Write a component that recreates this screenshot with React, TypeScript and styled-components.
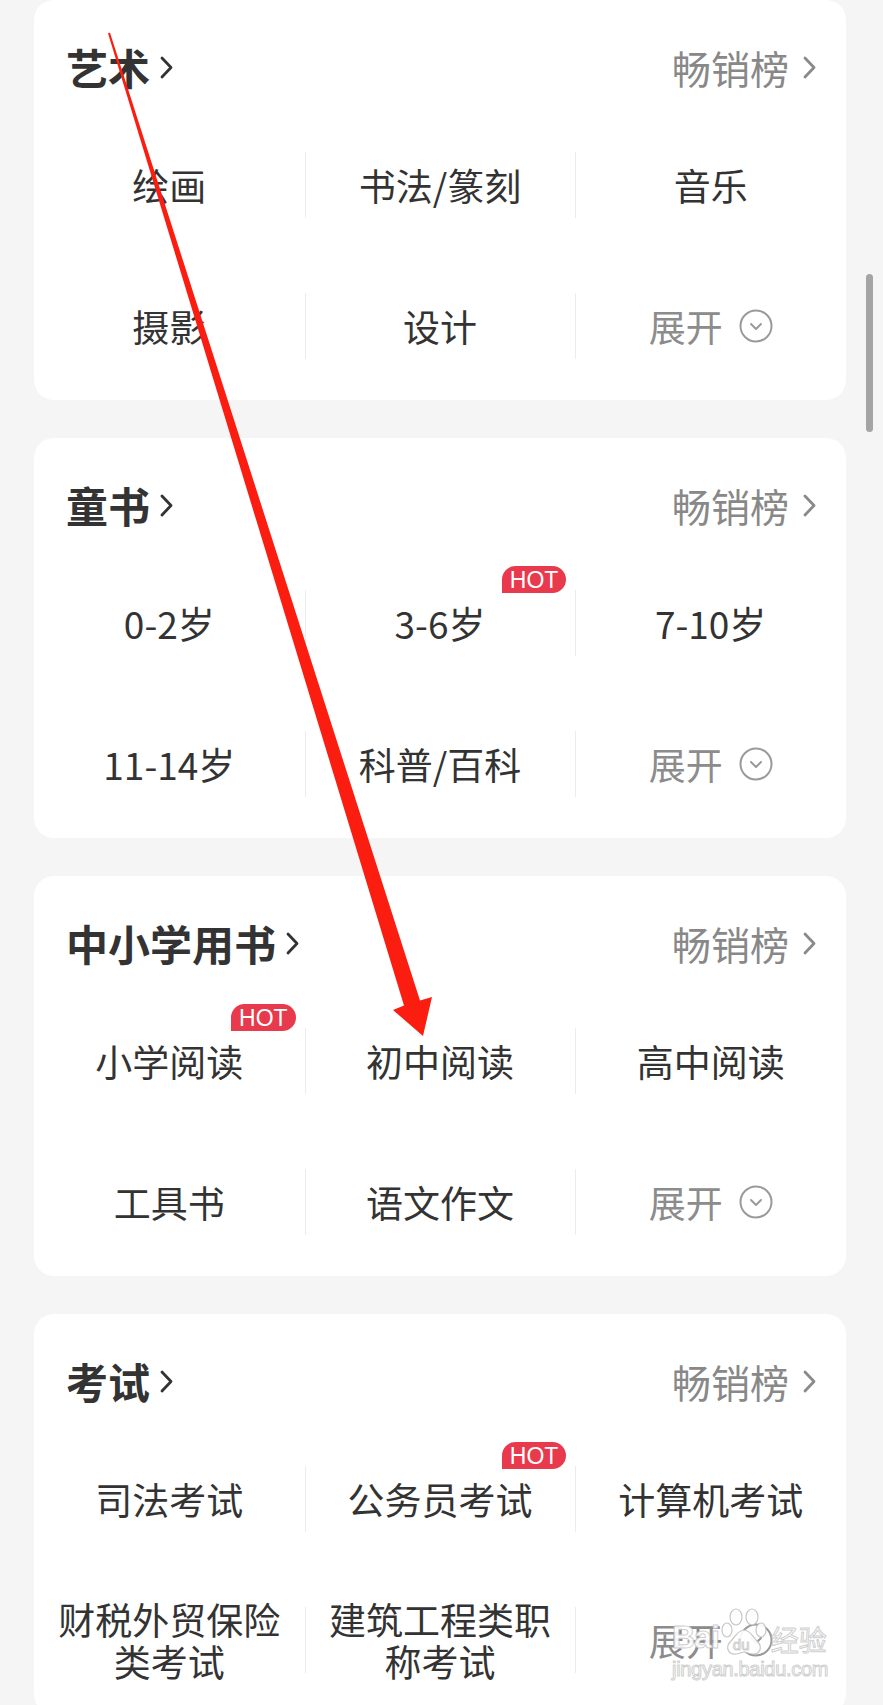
import React from 'react';
import styled, { createGlobalStyle } from 'styled-components';

const GlobalStyle = createGlobalStyle`
  html, body {
    margin: 0;
    padding: 0;
    background: #f5f5f5;
  }
  body {
    font-family: "Noto Sans CJK SC", "Noto Sans", sans-serif;
    overflow: hidden;
  }
  * { box-sizing: border-box; }
`;

type Item = { label: string; hot?: boolean };
type Section = { title: string; items: Item[] };

const sections: Section[] = [
  {
    title: '艺术',
    items: [{ label: '绘画' }, { label: '书法/篆刻' }, { label: '音乐' }, { label: '摄影' }, { label: '设计' }],
  },
  {
    title: '童书',
    items: [
      { label: '0-2岁' },
      { label: '3-6岁', hot: true },
      { label: '7-10岁' },
      { label: '11-14岁' },
      { label: '科普/百科' },
    ],
  },
  {
    title: '中小学用书',
    items: [
      { label: '小学阅读', hot: true },
      { label: '初中阅读' },
      { label: '高中阅读' },
      { label: '工具书' },
      { label: '语文作文' },
    ],
  },
  {
    title: '考试',
    items: [
      { label: '司法考试' },
      { label: '公务员考试', hot: true },
      { label: '计算机考试' },
      { label: '财税外贸保险类考试' },
      { label: '建筑工程类职称考试' },
    ],
  },
];

const Page = styled.div`
  position: relative;
  width: 883px;
  height: 1705px;
  overflow: hidden;
  padding: 0 37px 0 34px;
  display: flex;
  flex-direction: column;
  gap: 38px;
`;

const Card = styled.section`
  flex-shrink: 0;
  height: 400px;
  background: #ffffff;
  border-radius: 20px;
  display: flex;
  flex-direction: column;
`;

const Header = styled.div`
  height: 114px;
  padding: 20px 30px 0 32px;
  display: flex;
  align-items: center;
  justify-content: space-between;
`;

const Title = styled.div`
  display: flex;
  align-items: center;
  gap: 10px;
  font-size: 42px;
  font-weight: 700;
  line-height: 1;
  color: #333333;
`;

const RankLink = styled.div`
  display: flex;
  align-items: center;
  gap: 14px;
  font-size: 39px;
  font-weight: 400;
  line-height: 1;
  color: #888888;
`;

const Grid = styled.div`
  display: grid;
  grid-template-columns: repeat(3, 1fr);
  grid-auto-rows: 141px;
`;

const Cell = styled.div<{ $divider: boolean; $muted?: boolean }>`
  position: relative;
  display: flex;
  align-items: center;
  justify-content: center;
  gap: 16px;
  padding: 0 16px;
  text-align: center;
  font-size: 37px;
  line-height: 42px;
  color: ${(p) => (p.$muted ? '#8c8c8c' : '#333333')};

  &::before {
    content: '';
    display: ${(p) => (p.$divider ? 'block' : 'none')};
    position: absolute;
    left: 0;
    top: 50%;
    width: 1px;
    height: 66px;
    transform: translateY(-50%);
    background: #ececec;
  }
`;

const Badge = styled.span`
  position: absolute;
  top: 14px;
  right: 9px;
  height: 27px;
  padding: 0 8px;
  border-radius: 14px 14px 14px 0;
  background: #e8394d;
  color: #ffffff;
  font-family: "Liberation Sans", Arial, sans-serif;
  font-size: 23px;
  line-height: 28px;
`;

const ScrollThumb = styled.div`
  position: absolute;
  right: 10px;
  top: 274px;
  width: 7px;
  height: 158px;
  border-radius: 4px;
  background: #a4a4a4;
`;

const Overlay = styled.svg`
  position: absolute;
  left: 0;
  top: 0;
  pointer-events: none;
`;

const Watermark = styled.div`
  position: absolute;
  left: 672px;
  top: 1608px;
  display: flex;
  flex-direction: column;
  align-items: flex-start;
  pointer-events: none;
  color: rgba(255, 255, 255, 0.92);
  -webkit-text-stroke: 1px rgba(190, 190, 190, 0.75);
`;

const WatermarkRow = styled.div`
  display: flex;
  align-items: flex-end;
  gap: 2px;
`;

const WatermarkBrand = styled.span`
  font-family: "Liberation Sans", Arial, sans-serif;
  font-weight: 700;
  font-size: 32px;
  line-height: 1;
  letter-spacing: -1px;
`;

const WatermarkCn = styled.span`
  font-size: 28px;
  line-height: 1;
  margin-left: 2px;
`;

const WatermarkUrl = styled.span`
  font-family: "Liberation Sans", Arial, sans-serif;
  font-size: 20px;
  line-height: 1;
  margin-top: 6px;
  letter-spacing: -0.3px;
`;

const Chevron: React.FC<{ color: string }> = ({ color }) => (
  <svg width="13" height="23" viewBox="0 0 13 23" fill="none">
    <path d="M2 2 L11 11.5 L2 21" stroke={color} strokeWidth="2.8" strokeLinecap="round" strokeLinejoin="round" />
  </svg>
);

const ExpandIcon: React.FC = () => (
  <svg width="34" height="34" viewBox="0 0 34 34" fill="none">
    <circle cx="17" cy="17" r="15.5" stroke="#9a9a9a" strokeWidth="2" />
    <path d="M12 15 L17 20 L22 15" stroke="#9a9a9a" strokeWidth="2" strokeLinecap="round" strokeLinejoin="round" />
  </svg>
);

const Paw: React.FC = () => (
  <svg width="46" height="48" viewBox="0 0 46 48" fill="rgba(255,255,255,0.92)" stroke="rgba(185,185,185,0.8)" strokeWidth="1.2">
    <ellipse cx="15" cy="9" rx="6" ry="8" />
    <ellipse cx="31" cy="9" rx="6" ry="8" />
    <ellipse cx="6" cy="22" rx="5" ry="7" />
    <ellipse cx="40" cy="22" rx="5" ry="7" />
    <path d="M23 22 C17 22 14 29 9 34 C4 40 8 47 15 46 C19 45.5 21 44 23 44 C25 44 27 45.5 31 46 C38 47 42 40 37 34 C32 29 29 22 23 22 Z" />
  </svg>
);

const PawText = styled.span`
  position: absolute;
  left: 12px;
  top: 29px;
  font-family: "Liberation Sans", Arial, sans-serif;
  font-size: 15px;
  line-height: 1;
`;

const PawBox = styled.span`
  position: relative;
  display: inline-flex;
  margin-bottom: -3px;
`;

const SectionCard: React.FC<{ section: Section }> = ({ section }) => (
  <Card>
    <Header>
      <Title>
        {section.title}
        <Chevron color="#333333" />
      </Title>
      <RankLink>
        畅销榜
        <Chevron color="#8a8a8a" />
      </RankLink>
    </Header>
    <Grid>
      {section.items.map((item, i) => (
        <Cell key={item.label} $divider={i % 3 !== 0}>
          {item.label}
          {item.hot && <Badge>HOT</Badge>}
        </Cell>
      ))}
      <Cell $divider $muted>
        展开
        <ExpandIcon />
      </Cell>
    </Grid>
  </Card>
);

export default function App() {
  // Tapered annotation arrow drawn over the page
  const shaft = '108,33.3 110,32.7 420,1000.5 432,997 423,1036 393,1010 404,1005.5';
  return (
    <>
      <GlobalStyle />
      <Page>
        {sections.map((s) => (
          <SectionCard key={s.title} section={s} />
        ))}
        <ScrollThumb />
        <Watermark>
          <WatermarkRow>
            <WatermarkBrand>Bai</WatermarkBrand>
            <PawBox>
              <Paw />
              <PawText>du</PawText>
            </PawBox>
            <WatermarkCn>经验</WatermarkCn>
          </WatermarkRow>
          <WatermarkUrl>jingyan.baidu.com</WatermarkUrl>
        </Watermark>
        <Overlay width="883" height="1705" viewBox="0 0 883 1705">
          <polygon points={shaft} fill="#fb1d10" />
        </Overlay>
      </Page>
    </>
  );
}
